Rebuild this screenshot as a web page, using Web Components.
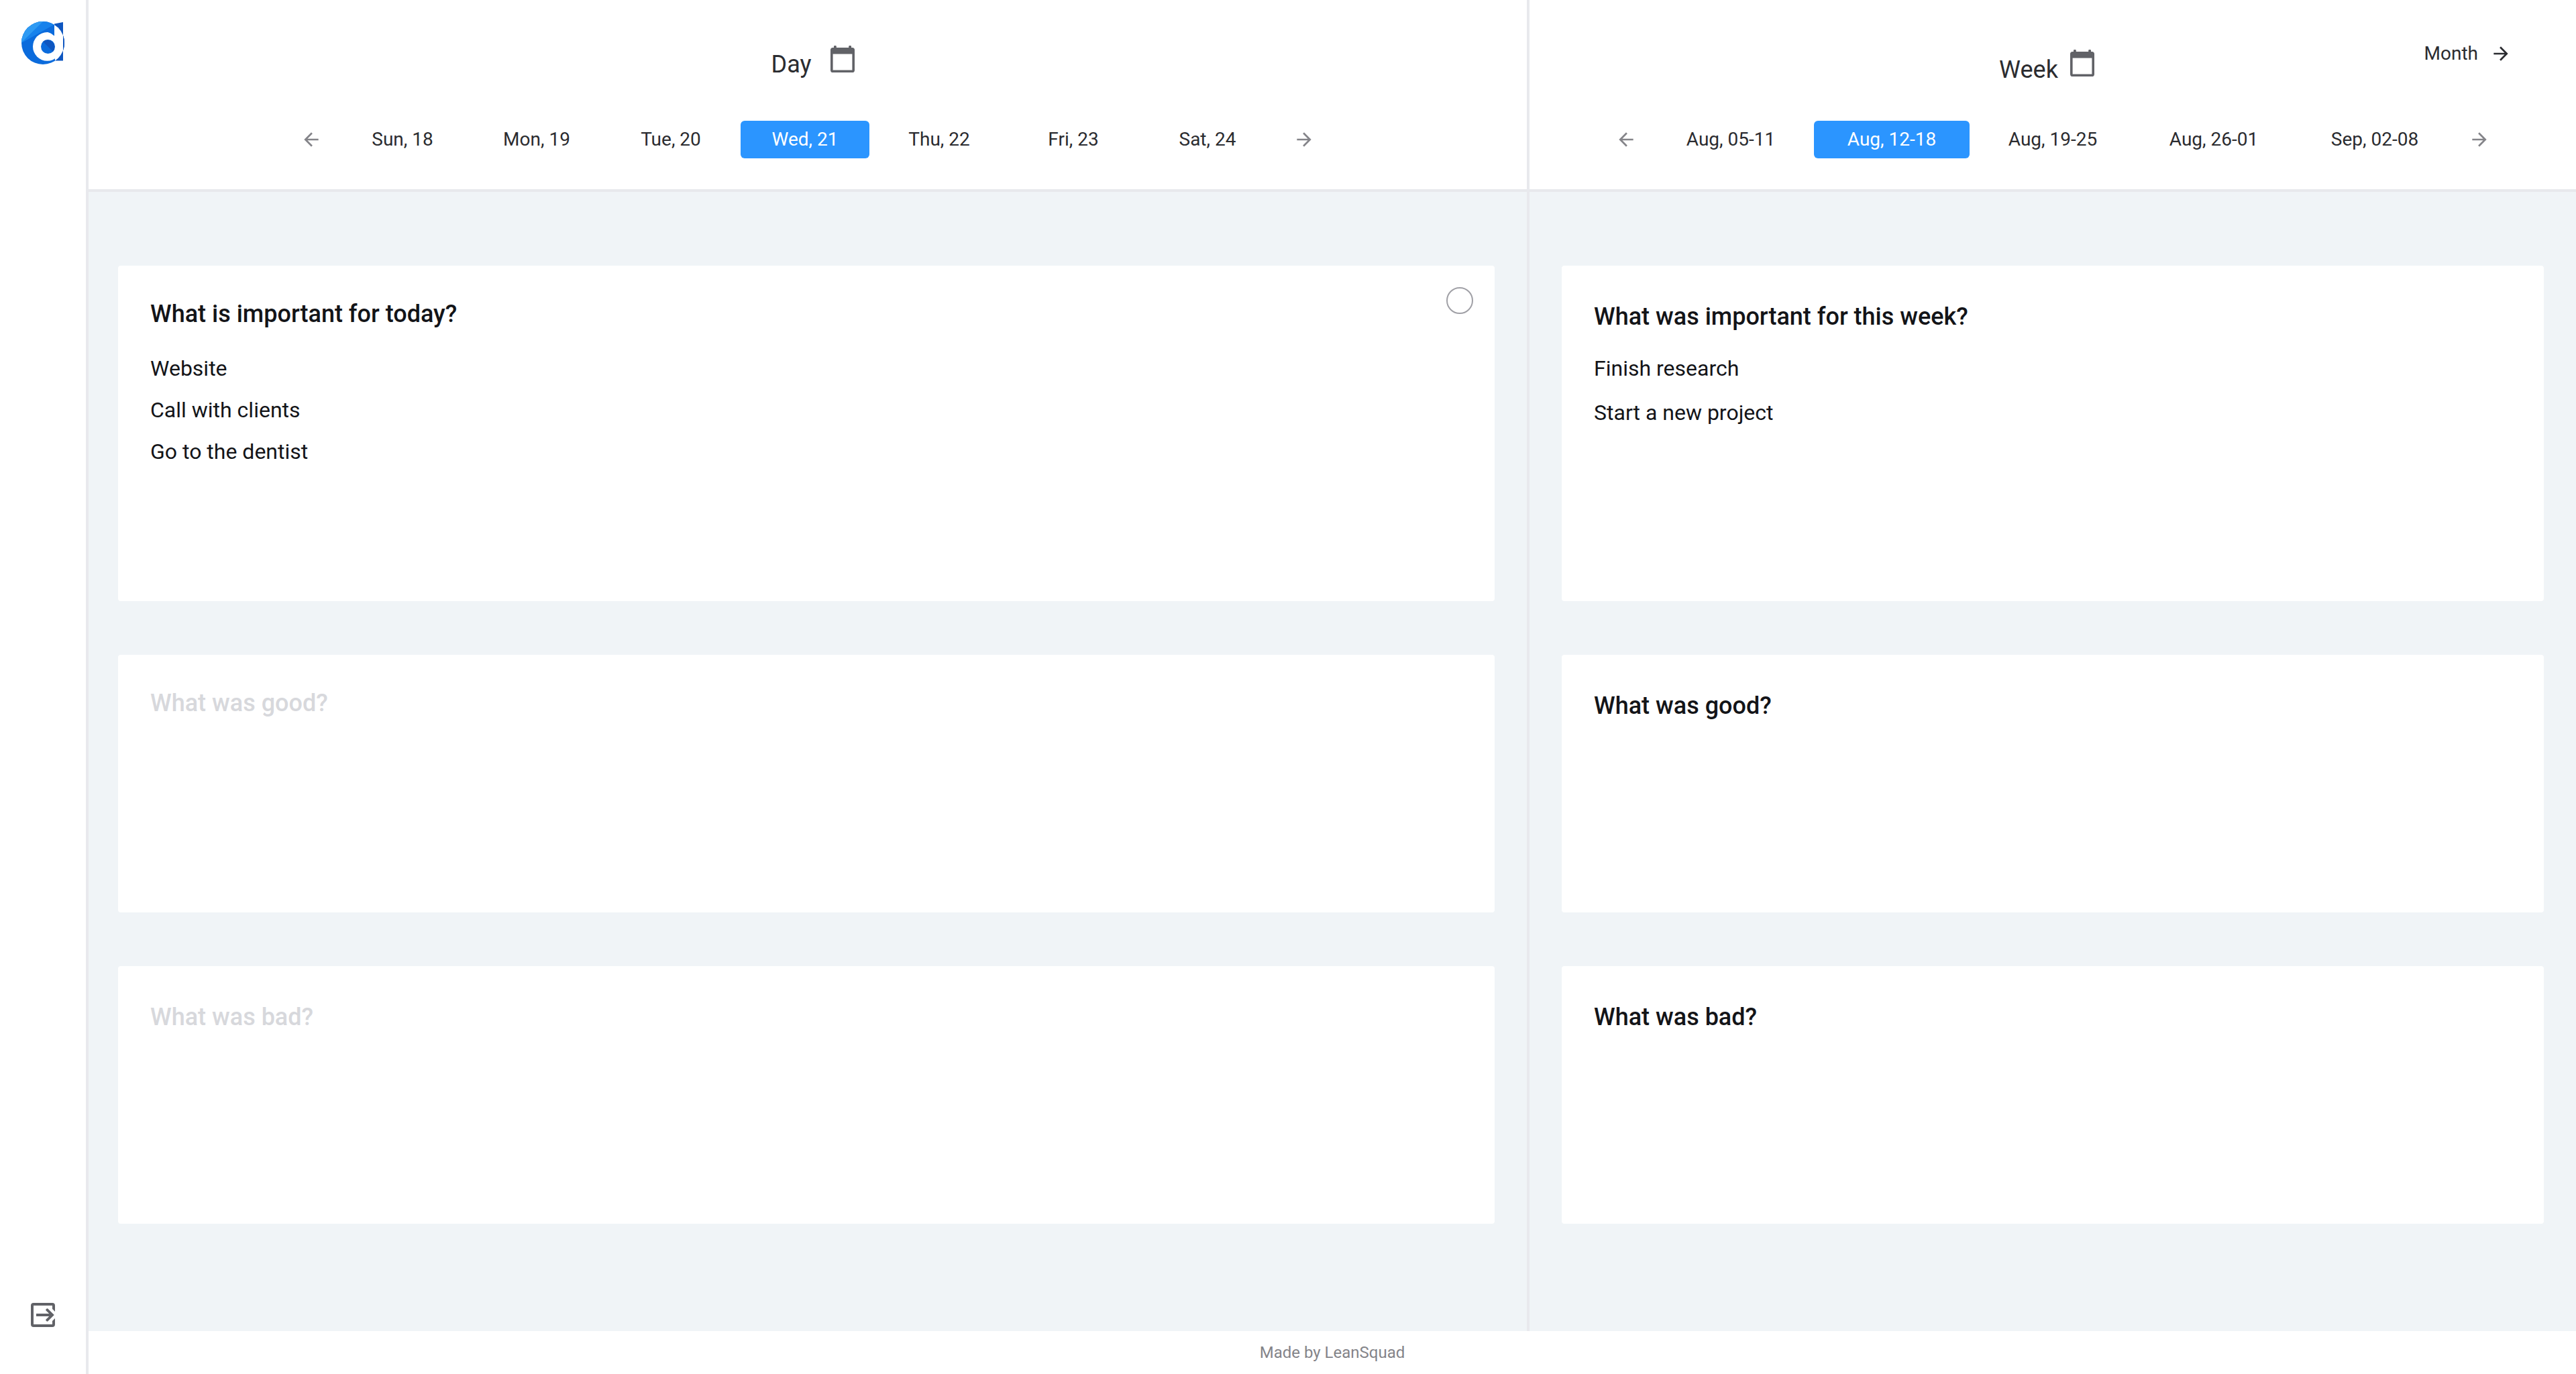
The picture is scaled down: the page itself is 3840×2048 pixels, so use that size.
<!DOCTYPE html>
<html lang="en">
<head>
<meta charset="utf-8">
<title>Daily planner</title>
<style>
  body {
    margin: 0;
    background: #f0f4f7;
    color: #2b2c30;
    font: 28px/32px Roboto, "Liberation Sans", sans-serif;
  }
</style>
</head>
<body>
<planner-app></planner-app>

<template id="app-t">
  <style>
    :host { display: grid; grid-template-columns: auto 1fr; min-height: 100vh; }
    .content { display: flex; flex-direction: column; min-width: 0; }
    main { flex: 1; display: grid; grid-template-columns: minmax(0, 179fr) minmax(0, 130fr); }
    planner-panel + planner-panel { --inset: 48px; --divider: 0px; }
    footer {
      padding: 16px; background: #fff; color: #848489;
      font-size: 24px; line-height: 32px; text-align: center;
    }
    .day { padding-left: 22px; }
    .week { padding: 6px 12px 0 0; --title-gap: 12px; --title-drop: 10px; }
  </style>
  <side-rail></side-rail>
  <div class="content">
    <main>
      <planner-panel>
        <panel-title slot="title" class="day">Day</panel-title>
        <date-strip slot="dates" cell="192" trail="32" active="3"
          dates="Sun, 18|Mon, 19|Tue, 20|Wed, 21|Thu, 22|Fri, 23|Sat, 24"></date-strip>
        <note-card checkable size="tall" heading="What is important for today?">
          <li>Website</li><li>Call with clients</li><li>Go to the dentist</li>
        </note-card>
        <note-card faint heading="What was good?"></note-card>
        <note-card faint low heading="What was bad?"></note-card>
      </planner-panel>
      <planner-panel>
        <panel-title slot="title" class="week">Week</panel-title>
        <nav-link slot="link">Month</nav-link>
        <date-strip slot="dates" cell="232" trail="24" active="1"
          dates="Aug, 05-11|Aug, 12-18|Aug, 19-25|Aug, 26-01|Sep, 02-08"></date-strip>
        <note-card low size="tall" heading="What was important for this week?">
          <li>Finish research</li><li>Start a new project</li>
        </note-card>
        <note-card low heading="What was good?"></note-card>
        <note-card low heading="What was bad?"></note-card>
      </planner-panel>
    </main>
    <footer>Made by LeanSquad</footer>
  </div>
</template>

<template id="rail-t">
  <style>
    :host {
      display: flex; flex-direction: column; justify-content: space-between; align-items: center;
      box-sizing: border-box; width: 132px; padding: 32px 0 64px;
      background: #fff; border-right: 4px solid #e8e9ed;
    }
    a, button { display: block; }
    button { padding: 0; border: 0; background: none; cursor: pointer; }
    svg { display: block; }
  </style>
  <a href="#" aria-label="Home">
    <svg width="64" height="64" viewBox="0 0 64 64">
      <defs><clipPath id="disc"><circle cx="32" cy="32" r="32"/></clipPath></defs>
      <path fill="#0f56c0" d="M49 3.5 62 1V58.500H50Z"/>
      <g clip-path="url(#disc)">
        <rect width="64" height="64" fill="#0b6bdc"/>
        <path fill="#1782ec" d="M0 32 49 4.500V0H0Z"/>
        <path fill="#2e9af3" d="M-1 32.500 33 -1H-1Z"/>
        <path fill="#0f56c0" d="M62 0h2v64h-2z"/>
        <path fill="#fff" d="M49 0H62V64H50V54L49 20Z"/>
      </g>
      <circle cx="38.400" cy="37.400" r="21.400" fill="#fff"/>
      <path fill="#0b6bdc" d="M49 12v9.500q-4.500-4-9-5.500L45 10z"/>
      <path fill="#0f56c0" d="M62 20.500Q64 26 64 32T62 43.500Z"/>
      <circle cx="39.500" cy="37.500" r="10.500" fill="#0b6bdc"/>
      <path fill="#0f56c0" d="M32.100 30.100A10.500 10.500 0 0 1 46.900 44.900Z"/>
    </svg>
  </a>
  <button type="button" aria-label="Log out">
    <svg width="48" height="48" viewBox="0 0 48 48" fill="#616267">
      <path d="M10 6h28a4 4 0 0 1 4 4v9l-4-4V10H10v28h28v-5l4-4v9a4 4 0 0 1-4 4H10a4 4 0 0 1-4-4V10a4 4 0 0 1 4-4z"/>
      <path d="M14 22h19.200l-4.800-4.800a2 2 0 0 1 0-1.400l1.400-1.400a2 2 0 0 1 1.400 0L40.800 24 31.200 33.600a2 2 0 0 1-1.400 0l-1.400-1.400a2 2 0 0 1 0-1.400L33.200 26H14z"/>
    </svg>
  </button>
</template>

<template id="panel-t">
  <style>
    :host { display: flex; flex-direction: column; border-right: var(--divider, 4px) solid #e8e9ed; }
    header {
      box-sizing: border-box; min-height: 286px; padding: 64px 0 46px;
      display: flex; flex-direction: column; justify-content: space-between;
      background: #fff; border-bottom: 4px solid #e8e9ed;
    }
    .top { display: grid; grid-template-columns: 1fr auto 1fr; align-items: start; }
    .title { grid-column: 2; }
    .link { grid-column: 3; justify-self: end; }
    .cards { display: flex; flex-direction: column; gap: 80px; padding: 110px 48px 160px var(--inset, 44px); }
  </style>
  <header>
    <div class="top">
      <div class="title"><slot name="title"></slot></div>
      <div class="link"><slot name="link"></slot></div>
    </div>
    <slot name="dates"></slot>
  </header>
  <section class="cards"><slot></slot></section>
</template>

<template id="title-t">
  <style>
    :host { display: flex; align-items: flex-start; gap: var(--title-gap, 23px); }
    h1 { margin: 0; padding-top: var(--title-drop, 8px); font-size: 36px; line-height: 48px; font-weight: 400; }
    button { padding: 0; border: 0; background: none; cursor: pointer; }
    svg { display: block; }
  </style>
  <h1><slot></slot></h1>
  <button type="button" aria-label="Open calendar">
    <svg width="48" height="48" viewBox="0 0 24 24" fill="#616267">
      <path fill-rule="evenodd" d="M5.500 3.500V2.600a.6.6 0 0 1 .6-.6h.7a.6.6 0 0 1 .6.6v.9h9.200v-.9a.6.6 0 0 1 .6-.6h.7a.6.6 0 0 1 .6.6v.9h.7a1.800 1.800 0 0 1 1.800 1.800v14.900A1.800 1.800 0 0 1 19.200 22H4.800A1.800 1.800 0 0 1 3 20.200V5.300a1.800 1.800 0 0 1 1.800-1.800zM4.800 8.300v11.900h14.400V8.300z"/>
    </svg>
  </button>
</template>

<template id="link-t">
  <style>
    :host { display: block; padding-right: 96px; }
    a { display: flex; align-items: center; gap: 18px; color: #2b2c30; text-decoration: none; }
    svg { display: block; }
  </style>
  <a href="#month"><slot></slot>
    <svg width="32" height="32" viewBox="0 0 24 24" fill="currentColor"><path d="M12 4l-1.410 1.410L16.170 11H4v2h12.170l-5.580 5.590L12 20l8-8z"/></svg>
  </a>
</template>

<template id="dates-t">
  <style>
    :host { display: block; }
    nav { display: flex; justify-content: center; align-items: center; }
    .cells { display: flex; gap: 8px; margin: 0 24px; }
    button { border: 0; padding: 0; background: none; color: inherit; font: inherit; cursor: pointer; }
    .cells button { height: 56px; border-radius: 6px; text-align: center; }
    .cells button[aria-current] { background: #2b95ff; color: #fff; }
    .arrow { color: #848489; }
    svg { display: block; }
  </style>
  <nav>
    <button class="arrow" type="button" aria-label="Earlier">
      <svg width="32" height="32" viewBox="0 0 24 24" fill="currentColor"><path d="M20 11H7.830l5.590-5.590L12 4l-8 8 8 8 1.410-1.410L7.830 13H20z"/></svg>
    </button>
    <div class="cells"></div>
    <button class="arrow" type="button" aria-label="Later">
      <svg width="32" height="32" viewBox="0 0 24 24" fill="currentColor"><path d="M12 4l-1.410 1.410L16.170 11H4v2h12.170l-5.580 5.590L12 20l8-8z"/></svg>
    </button>
  </nav>
</template>

<template id="card-t">
  <style>
    :host {
      display: block; box-sizing: border-box; min-height: 384px; padding: 32px;
      background: #fff; border-radius: 4px; color: #131418;
    }
    :host([size="tall"]) { min-height: 500px; }
    .row { display: flex; justify-content: space-between; align-items: flex-start; height: 60px; }
    h2 { margin: 0; padding: 16px 0 0 16px; font-size: 36px; line-height: 48px; font-weight: 500; }
    :host([low]) h2 { padding-top: 20px; }
    :host([faint]) h2 { color: #d7d8dc; }
    ul { list-style: none; margin: 0; padding: 30px 16px 0; font-size: 32px; line-height: 62px; }
    :host([low]) ul { padding-top: 28px; line-height: 66px; }
    input {
      appearance: none; box-sizing: border-box; width: 40px; height: 40px; margin: 0;
      border: 2px solid #a0a0a6; border-radius: 50%; background: #fff;
    }
    input:checked { background: #2b95ff; border-color: #2b95ff; }
  </style>
  <div class="row"><h2></h2></div>
  <ul><slot></slot></ul>
</template>

<script>
  const stamp = (host, id) => {
    const root = host.attachShadow({ mode: "open" });
    root.append(document.getElementById(id).content.cloneNode(true));
    return root;
  };
  const define = (name, id, setup) => customElements.define(name, class extends HTMLElement {
    connectedCallback() {
      if (this.shadowRoot) return;
      const root = stamp(this, id);
      if (setup) setup(this, root);
    }
  });

  define("side-rail", "rail-t");
  define("planner-panel", "panel-t");
  define("panel-title", "title-t");
  define("nav-link", "link-t");
  define("date-strip", "dates-t", (host, root) => {
    const cells = root.querySelector(".cells");
    cells.style.marginRight = host.getAttribute("trail") + "px";
    host.getAttribute("dates").split("|").forEach((label, i) => {
      const b = document.createElement("button");
      b.type = "button";
      b.textContent = label;
      b.style.width = host.getAttribute("cell") + "px";
      if (i === Number(host.getAttribute("active"))) b.setAttribute("aria-current", "date");
      cells.append(b);
    });
  });
  define("note-card", "card-t", (host, root) => {
    const h = root.querySelector("h2");
    h.textContent = host.getAttribute("heading");
    h.id = "heading";
    if (host.hasAttribute("checkable")) {
      const box = document.createElement("input");
      box.type = "checkbox";
      box.setAttribute("aria-labelledby", "heading");
      root.querySelector(".row").append(box);
    }
  });
  define("planner-app", "app-t");
</script>
</body>
</html>
